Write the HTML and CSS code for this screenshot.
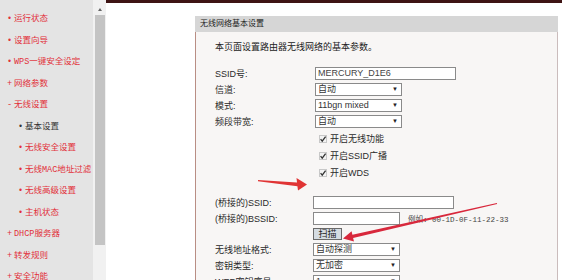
FILE: index.html
```html
<!DOCTYPE html>
<html lang="zh-CN">
<head>
    <meta charset="UTF-8">
    <title>无线网络基本设置</title>
    <link rel="stylesheet" href="styles.css">
</head>
<body>
<div class="page">
    <ul class="menu">
        <li><span class="mark">•</span>运行状态</li>
        <li><span class="mark">•</span>设置向导</li>
        <li><span class="mark">•</span>WPS一键安全设定</li>
        <li><span class="mark">+</span>网络参数</li>
        <li><span class="mark">-</span>无线设置</li>
        <li class="sub current"><span class="mark">•</span>基本设置</li>
        <li class="sub"><span class="mark">•</span>无线安全设置</li>
        <li class="sub"><span class="mark">•</span>无线MAC地址过滤</li>
        <li class="sub"><span class="mark">•</span>无线高级设置</li>
        <li class="sub"><span class="mark">•</span>主机状态</li>
        <li><span class="mark">+</span>DHCP服务器</li>
        <li><span class="mark">+</span>转发规则</li>
        <li><span class="mark">+</span>安全功能</li>
    </ul>

    <div class="scrollbar">
        <span class="up"></span>
        <span class="thumb"></span>
    </div>

    <div class="content">
        <div class="panel">
            <div class="panel-title">无线网络基本设置</div>
            <div class="panel-body">
                <p class="desc">本页面设置路由器无线网络的基本参数。</p>

                <div class="form basic">
                    <span>SSID号:</span>
                    <span class="field wide">MERCURY_D1E6</span>
                    <span>信道:</span>
                    <span class="field select">自动<i class="caret">▼</i></span>
                    <span>模式:</span>
                    <span class="field select">11bgn mixed<i class="caret">▼</i></span>
                    <span>频段带宽:</span>
                    <span class="field select">自动<i class="caret">▼</i></span>
                </div>

                <div class="checks">
                    <div class="check">
                        <svg class="box" width="8" height="8" viewBox="0 0 8 8"><rect x="0.5" y="0.5" width="7" height="7" fill="#f3f3f3" stroke="#c8c8c8"/><path d="M1.6 4.2 L3.2 6.1 L6.6 1.6" fill="none" stroke="#333" stroke-width="1.3"/></svg>
                        开启无线功能
                    </div>
                    <div class="check">
                        <svg class="box" width="8" height="8" viewBox="0 0 8 8"><rect x="0.5" y="0.5" width="7" height="7" fill="#f3f3f3" stroke="#c8c8c8"/><path d="M1.6 4.2 L3.2 6.1 L6.6 1.6" fill="none" stroke="#333" stroke-width="1.3"/></svg>
                        开启SSID广播
                    </div>
                    <div class="check">
                        <svg class="box" width="8" height="8" viewBox="0 0 8 8"><rect x="0.5" y="0.5" width="7" height="7" fill="#f3f3f3" stroke="#c8c8c8"/><path d="M1.6 4.2 L3.2 6.1 L6.6 1.6" fill="none" stroke="#333" stroke-width="1.3"/></svg>
                        开启WDS
                    </div>
                </div>

                <div class="form wds">
                    <span>(桥接的)SSID:</span>
                    <span class="field wide"></span>
                    <span>(桥接的)BSSID:</span>
                    <span class="pair">
                        <span class="field"></span>
                        <span class="hint">例如: 00-1D-0F-11-22-33</span>
                    </span>
                    <span></span>
                    <button type="button" class="btn">扫描</button>
                    <span>无线地址格式:</span>
                    <span class="field select">自动探测<i class="caret">▼</i></span>
                    <span>密钥类型:</span>
                    <span class="field select">无加密<i class="caret">▼</i></span>
                    <span>WEP密钥序号:</span>
                    <span class="field select">1<i class="caret">▼</i></span>
                </div>
            </div>
        </div>
    </div>
</div>

<!-- red marker arrows drawn over the screenshot -->
<svg class="marks" width="562" height="280" viewBox="0 0 562 280">
    <polygon fill="#e03434" points="258,180 297,182.4 296.5,178 307,184.6 298,190.5 297.4,186.2 258,181.3"/>
    <polygon fill="#d8283c" points="496.9,203 352.4,234.7 351.6,231.2 343,238.5 354,241.4 353.1,237.9 497.1,204"/>
</svg>
</body>
</html>
```

FILE: styles.css
```css
body {
    margin: 0;
    width: 562px;
    height: 280px;
    overflow: hidden;
    position: relative;
    background: #fff;
    font-family: "Liberation Sans", "Noto Sans CJK SC", sans-serif;
}

.page {
    display: flex;
    height: 280px;
}

/* left menu */
.menu {
    flex: none;
    width: 93px;
    margin: 0;
    padding: 9px 0 0;
    list-style: none;
    background: #e4e4e4;
    font-family: "Liberation Mono", "Noto Sans CJK SC", monospace;
    font-size: 8.5px;
    color: #e2303a;
}
.menu li {
    height: 21.5px;
    line-height: 21.5px;
    padding-left: 7px;
    white-space: nowrap;
}
.menu li.sub {
    padding-left: 18px;
}
.menu .mark {
    display: inline-block;
    width: 7px;
}
.menu .current {
    color: #333;
}

.scrollbar {
    flex: none;
    width: 13px;
    background: #f1f1f1;
    display: flex;
    flex-direction: column;
    align-items: center;
}
.scrollbar .up {
    margin-top: 8px;
    width: 0;
    height: 0;
    border-left: 2.5px solid transparent;
    border-right: 2.5px solid transparent;
    border-bottom: 3px solid #666;
}
.scrollbar .thumb {
    margin-top: 4px;
    width: 10px;
    height: 230px;
    background: #c4c4c4;
}

/* main */
.content {
    flex: 1;
    border-top: 3px solid #3e1414;
}
.panel {
    margin: 13px 0 0 89px;
    width: 363px;
}
.panel-title {
    height: 16px;
    line-height: 16px;
    padding-left: 5px;
    background: #d6d6d6;
    font-size: 8px;
    color: #222;
}
.panel-body {
    height: 300px;
    padding-left: 19px;
    background: #f8f6f5;
    border-left: 1px solid #b98e84;
    border-right: 1px solid #cbbcbc;
}
.desc {
    margin: 0;
    padding: 10px 0 13px;
    line-height: 10px;
    font-size: 9px;
    color: #222;
}

.form {
    display: grid;
    grid-template-columns: 100px auto;
    grid-auto-rows: 16px;
    align-items: center;
    justify-items: start;
    font-size: 9px;
    color: #2a2a2a;
}
.form.wds {
    margin-top: 13px;
    grid-template-columns: 98px auto;
    grid-template-rows: 16px 16px 15px 16px 16px 16px;
}

.field {
    box-sizing: border-box;
    width: 87px;
    height: 13px;
    padding-left: 2px;
    border: 1px solid #8a8a8a;
    background: #fff;
    font-size: 9px;
    line-height: 11px;
    color: #444;
}
.field.wide {
    width: 141px;
}
.select {
    display: flex;
    justify-content: space-between;
    align-items: center;
    padding-right: 3px;
    color: #333;
}
.caret {
    font-style: normal;
    font-size: 6px;
    color: #222;
}

.checks {
    margin: 1px 0 0 104px;
    font-size: 9px;
    color: #2a2a2a;
}
.check {
    height: 17px;
    display: flex;
    align-items: center;
    gap: 3px;
}

.pair {
    display: flex;
    align-items: center;
    gap: 8px;
}
.hint {
    font-family: "Liberation Mono", "Noto Sans CJK SC", monospace;
    font-size: 7.5px;
    color: #444;
}

.btn {
    box-sizing: border-box;
    width: 29px;
    height: 12px;
    padding: 0;
    border: 1px solid #6a6a6a;
    background: #d5dce2;
    font-family: "Liberation Sans", "Noto Sans CJK SC", sans-serif;
    font-size: 9px;
    line-height: 10px;
    color: #222;
}

.marks {
    position: absolute;
    left: 0;
    top: 0;
    pointer-events: none;
}
```
